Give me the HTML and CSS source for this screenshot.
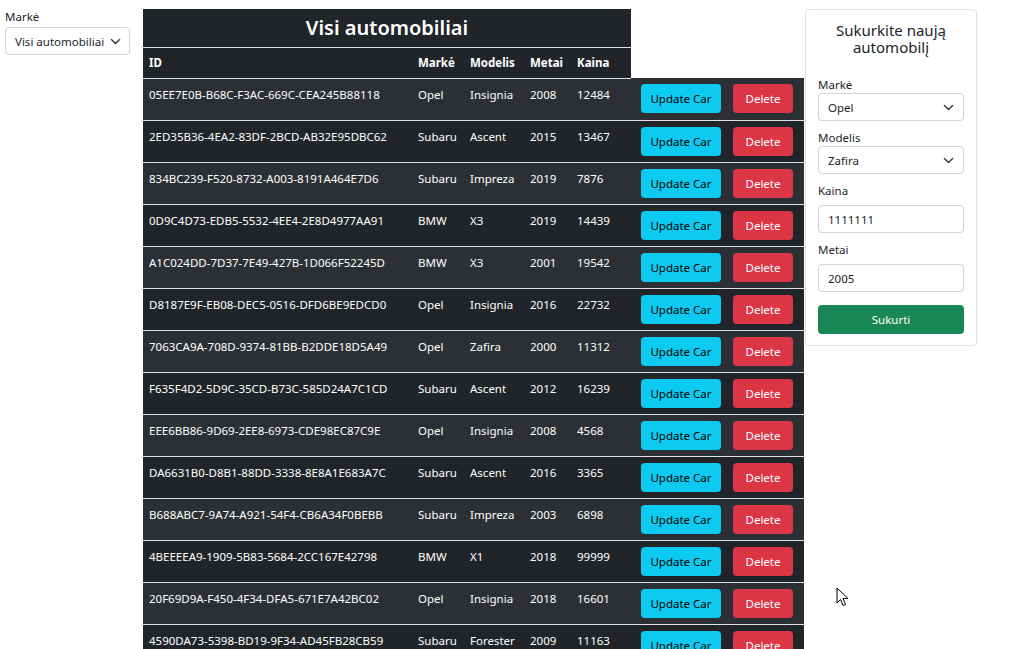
FILE: index.html
```html
<!DOCTYPE html>
<html lang="lt">
<head>
<meta charset="utf-8">
<title>Automobiliai</title>
<link rel="stylesheet" href="styles.css">
</head>
<body>
<div class="page">
  <aside class="filter">
    <label class="lbl">Markė</label>
    <div class="select select-filter"><span>Visi automobiliai</span><svg viewBox="0 0 16 16" width="11" height="11"><path d="M2 5l6 6 6-6" fill="none" stroke="#343a40" stroke-width="2" stroke-linecap="round" stroke-linejoin="round"/></svg></div>
  </aside>
  <main class="list">
    <table class="cars">
      <thead>
        <tr><th colspan="5" class="title">Visi automobiliai</th></tr>
        <tr class="head"><th>ID</th><th>Markė</th><th>Modelis</th><th>Metai</th><th>Kaina</th></tr>
      </thead>
      <tbody>
        <tr><td>05EE7E0B-B68C-F3AC-669C-CEA245B88118</td><td>Opel</td><td>Insignia</td><td>2008</td><td>12484</td><td class="act"><button class="btn upd">Update Car</button></td><td class="act del-cell"><button class="btn del">Delete</button></td></tr>
        <tr><td>2ED35B36-4EA2-83DF-2BCD-AB32E95DBC62</td><td>Subaru</td><td>Ascent</td><td>2015</td><td>13467</td><td class="act"><button class="btn upd">Update Car</button></td><td class="act del-cell"><button class="btn del">Delete</button></td></tr>
        <tr><td>834BC239-F520-8732-A003-8191A464E7D6</td><td>Subaru</td><td>Impreza</td><td>2019</td><td>7876</td><td class="act"><button class="btn upd">Update Car</button></td><td class="act del-cell"><button class="btn del">Delete</button></td></tr>
        <tr><td>0D9C4D73-EDB5-5532-4EE4-2E8D4977AA91</td><td>BMW</td><td>X3</td><td>2019</td><td>14439</td><td class="act"><button class="btn upd">Update Car</button></td><td class="act del-cell"><button class="btn del">Delete</button></td></tr>
        <tr><td>A1C024DD-7D37-7E49-427B-1D066F52245D</td><td>BMW</td><td>X3</td><td>2001</td><td>19542</td><td class="act"><button class="btn upd">Update Car</button></td><td class="act del-cell"><button class="btn del">Delete</button></td></tr>
        <tr><td>D8187E9F-EB08-DEC5-0516-DFD6BE9EDCD0</td><td>Opel</td><td>Insignia</td><td>2016</td><td>22732</td><td class="act"><button class="btn upd">Update Car</button></td><td class="act del-cell"><button class="btn del">Delete</button></td></tr>
        <tr><td>7063CA9A-708D-9374-81BB-B2DDE18D5A49</td><td>Opel</td><td>Zafira</td><td>2000</td><td>11312</td><td class="act"><button class="btn upd">Update Car</button></td><td class="act del-cell"><button class="btn del">Delete</button></td></tr>
        <tr><td>F635F4D2-5D9C-35CD-B73C-585D24A7C1CD</td><td>Subaru</td><td>Ascent</td><td>2012</td><td>16239</td><td class="act"><button class="btn upd">Update Car</button></td><td class="act del-cell"><button class="btn del">Delete</button></td></tr>
        <tr><td>EEE6BB86-9D69-2EE8-6973-CDE98EC87C9E</td><td>Opel</td><td>Insignia</td><td>2008</td><td>4568</td><td class="act"><button class="btn upd">Update Car</button></td><td class="act del-cell"><button class="btn del">Delete</button></td></tr>
        <tr><td>DA6631B0-D8B1-88DD-3338-8E8A1E683A7C</td><td>Subaru</td><td>Ascent</td><td>2016</td><td>3365</td><td class="act"><button class="btn upd">Update Car</button></td><td class="act del-cell"><button class="btn del">Delete</button></td></tr>
        <tr><td>B688ABC7-9A74-A921-54F4-CB6A34F0BEBB</td><td>Subaru</td><td>Impreza</td><td>2003</td><td>6898</td><td class="act"><button class="btn upd">Update Car</button></td><td class="act del-cell"><button class="btn del">Delete</button></td></tr>
        <tr><td>4BEEEEA9-1909-5B83-5684-2CC167E42798</td><td>BMW</td><td>X1</td><td>2018</td><td>99999</td><td class="act"><button class="btn upd">Update Car</button></td><td class="act del-cell"><button class="btn del">Delete</button></td></tr>
        <tr><td>20F69D9A-F450-4F34-DFA5-671E7A42BC02</td><td>Opel</td><td>Insignia</td><td>2018</td><td>16601</td><td class="act"><button class="btn upd">Update Car</button></td><td class="act del-cell"><button class="btn del">Delete</button></td></tr>
        <tr><td>4590DA73-5398-BD19-9F34-AD45FB28CB59</td><td>Subaru</td><td>Forester</td><td>2009</td><td>11163</td><td class="act"><button class="btn upd">Update Car</button></td><td class="act del-cell"><button class="btn del">Delete</button></td></tr>
      </tbody>
    </table>
  </main>
  <section class="card">
    <h2 class="card-title">Sukurkite naują automobilį</h2>
    <label class="lbl f-lbl">Markė</label>
    <div class="select"><span>Opel</span><svg viewBox="0 0 16 16" width="11" height="11"><path d="M2 5l6 6 6-6" fill="none" stroke="#343a40" stroke-width="2" stroke-linecap="round" stroke-linejoin="round"/></svg></div>
    <label class="lbl f-lbl g-model">Modelis</label>
    <div class="select"><span>Zafira</span><svg viewBox="0 0 16 16" width="11" height="11"><path d="M2 5l6 6 6-6" fill="none" stroke="#343a40" stroke-width="2" stroke-linecap="round" stroke-linejoin="round"/></svg></div>
    <label class="lbl f-lbl g-price">Kaina</label>
    <input class="input" type="text" value="1111111">
    <label class="lbl f-lbl g-year">Metai</label>
    <input class="input" type="text" value="2005">
    <button class="btn create">Sukurti</button>
  </section>
</div>
<svg class="cursor" width="14" height="21" viewBox="0 0 14 21"><path d="M1 1 L1 16 L4.5 12.5 L7 18.5 L9.5 17.5 L7 11.5 L12 11.5 Z" fill="#fff" stroke="#000" stroke-width="1" stroke-linejoin="round"/></svg>
</body>
</html>
```

FILE: styles.css
```css
* { box-sizing: border-box; }
html, body { margin: 0; padding: 0; background: #fff; }
body {
  font-family: "Noto Sans", "Open Sans", sans-serif;
  font-size: 11.5px;
  color: #212529;
  position: relative;
  height: 649px;
  overflow: hidden;
}
.page {
  display: flex;
  align-items: flex-start;
  padding-top: 9px;
}
.filter {
  width: 143px;
  padding: 0 13px 0 5px;
  flex: none;
}
.lbl { display: block; font-size: 11.5px; line-height: 16px; }
.filter .lbl { margin-top: 0; margin-bottom: 2px; }
.select {
  display: flex;
  align-items: center;
  justify-content: space-between;
  height: 28px;
  border: 1px solid #ced4da;
  border-radius: 4px;
  padding: 0 9px 0 9px;
  font-size: 11.5px;
  color: #212529;
  background: #fff;
}
.select svg { flex: none; }
.select-filter { width: 125px; padding-right: 8px; }

.list { flex: none; width: 662px; }
.cars {
  border-collapse: collapse;
  color: #fff;
  font-size: 11.5px;
}
.cars th, .cars td {
  padding: 0 6px;
  text-align: left;
  border-bottom: 1px solid #dee2e6;
  white-space: nowrap;
}
.cars th.title {
  background: #212529;
  text-align: center;
  font-size: 20px;
  font-weight: 600;
  height: 38px;
  padding: 0;
  vertical-align: middle;
}
.head th {
  background: #212529;
  font-weight: 700;
  height: 31px;
  vertical-align: middle;
}
.cars td {
  vertical-align: top;
  padding-top: 7px;
  line-height: 17px;
}
.cars tbody tr:nth-child(odd) td { background: #2c3034; }
.cars tbody tr:nth-child(even) td { background: #212529; }
.cars td:nth-child(1) { width: 269px; }
.cars td:nth-child(2) { width: 52px; }
.cars td:nth-child(3) { width: 60px; }
.cars td:nth-child(4) { width: 47px; }
.cars td:nth-child(5) { width: 60px; }
.cars td.act { padding: 6px 6px 6px 10px; height: 42px; line-height: 0; }
.cars td.del-cell { padding: 6px 11px 6px 6px; }

.btn {
  font-family: inherit;
  font-size: 11.5px;
  height: 29px;
  border: none;
  border-radius: 4px;
  cursor: pointer;
  padding: 0;
}
.upd { width: 80px; background: #0dcaf0; color: #000; }
.del { width: 60px; background: #dc3545; color: #fff; }

.card {
  flex: none;
  width: 172px;
  border: 1px solid #dee2e6;
  border-radius: 4px;
  padding: 12px 12px 11px 12px;
}
.card-title {
  margin: 0 0 21px;
  text-align: center;
  font-size: 15px;
  font-weight: 400;
  line-height: 17px;
}
.f-lbl { margin-bottom: 0; }
.f-lbl.g-model { margin-top: 9px; }
.f-lbl.g-price { margin-top: 9px; margin-bottom: 6px; }
.f-lbl.g-year { margin-top: 9px; margin-bottom: 6px; }
.input {
  display: block;
  width: 100%;
  height: 28px;
  border: 1px solid #ced4da;
  border-radius: 4px;
  padding: 0 9px;
  font-family: inherit;
  font-size: 11.5px;
  color: #212529;
}
.create {
  display: block;
  width: 100%;
  margin-top: 13px;
  background: #198754;
  color: #fff;
  height: 29px;
}
.cursor { position: absolute; left: 836px; top: 587px; }
```
